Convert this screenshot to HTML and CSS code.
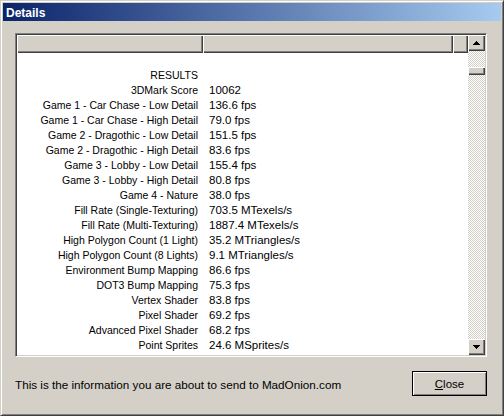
FILE: index.html
```html
<!DOCTYPE html>
<html>
<head>
<meta charset="utf-8">
<link rel="stylesheet" href="styles.css">
</head>
<body>
<div class="window">
  <div class="titlebar"><span class="title">Details</span></div>
  <div class="content">
    <div class="listbox">
      <div class="listmain">
        <div class="header">
          <div class="hcol c1"></div>
          <div class="hcol c2"></div>
          <div class="hcol c3"></div>
        </div>
        <div class="rows">
          <div class="row"><span class="lbl"></span><span class="val"></span></div>
          <div class="row"><span class="lbl">RESULTS</span><span class="val"></span></div>
          <div class="row"><span class="lbl">3DMark Score</span><span class="val">10062</span></div>
          <div class="row"><span class="lbl">Game 1 - Car Chase - Low Detail</span><span class="val">136.6 fps</span></div>
          <div class="row"><span class="lbl">Game 1 - Car Chase - High Detail</span><span class="val">79.0 fps</span></div>
          <div class="row"><span class="lbl">Game 2 - Dragothic - Low Detail</span><span class="val">151.5 fps</span></div>
          <div class="row"><span class="lbl">Game 2 - Dragothic - High Detail</span><span class="val">83.6 fps</span></div>
          <div class="row"><span class="lbl">Game 3 - Lobby - Low Detail</span><span class="val">155.4 fps</span></div>
          <div class="row"><span class="lbl">Game 3 - Lobby - High Detail</span><span class="val">80.8 fps</span></div>
          <div class="row"><span class="lbl">Game 4 - Nature</span><span class="val">38.0 fps</span></div>
          <div class="row"><span class="lbl">Fill Rate (Single-Texturing)</span><span class="val">703.5 MTexels/s</span></div>
          <div class="row"><span class="lbl">Fill Rate (Multi-Texturing)</span><span class="val">1887.4 MTexels/s</span></div>
          <div class="row"><span class="lbl">High Polygon Count (1 Light)</span><span class="val">35.2 MTriangles/s</span></div>
          <div class="row"><span class="lbl">High Polygon Count (8 Lights)</span><span class="val">9.1 MTriangles/s</span></div>
          <div class="row"><span class="lbl">Environment Bump Mapping</span><span class="val">86.6 fps</span></div>
          <div class="row"><span class="lbl">DOT3 Bump Mapping</span><span class="val">75.3 fps</span></div>
          <div class="row"><span class="lbl">Vertex Shader</span><span class="val">83.8 fps</span></div>
          <div class="row"><span class="lbl">Pixel Shader</span><span class="val">69.2 fps</span></div>
          <div class="row"><span class="lbl">Advanced Pixel Shader</span><span class="val">68.2 fps</span></div>
          <div class="row"><span class="lbl">Point Sprites</span><span class="val">24.6 MSprites/s</span></div>
        </div>
      </div>
      <div class="scrollbar">
        <div class="sbtn"><svg width="7" height="4" viewBox="0 0 7 4"><path d="M3 0h1v1h1v1h1v1h1v1H0V3h1V2h1V1h1z" fill="#000"/></svg></div>
        <div class="track"><div class="thumb"></div></div>
        <div class="sbtn"><svg width="7" height="4" viewBox="0 0 7 4"><path d="M0 0h7v1H6v1H5v1H4v1H3V3H2V2H1V1H0z" fill="#000"/></svg></div>
      </div>
    </div>
    <div class="footer">
      <span class="info">This is the information you are about to send to MadOnion.com</span>
      <button class="btn"><span class="ul">C</span>lose</button>
    </div>
  </div>
</div>
</body>
</html>
```
FILE: styles.css
```css
html, body {
  margin: 0;
  padding: 0;
  background: #d4d0c8;
}
body {
  font-family: "Liberation Sans", Arial, sans-serif;
  font-size: 11px;
  color: #000;
}
.window {
  width: 504px;
  height: 416px;
  box-sizing: border-box;
  background: #d4d0c8;
  border: 1px solid;
  border-color: #d4d0c8 #404040 #404040 #d4d0c8;
  box-shadow: inset 1px 1px #fff, inset -1px -1px #808080;
  padding: 2px;
  display: flex;
  flex-direction: column;
}
.titlebar {
  height: 18px;
  flex: none;
  background: linear-gradient(to right, #0a246a, #a6caf0);
  display: flex;
  align-items: center;
  padding: 1px 0 0 3px;
  box-sizing: border-box;
}
.title {
  color: #fff;
  font-weight: bold;
  font-size: 12px;
  line-height: 14px;
}
.content {
  padding: 12px 14px 0 12px;
  display: flex;
  flex-direction: column;
}
.listbox {
  height: 324px;
  box-sizing: border-box;
  border: 1px solid;
  border-color: #808080 #fff #fff #808080;
  box-shadow: inset 1px 1px #404040, inset -1px -1px #d4d0c8;
  padding: 1px;
  background: #fff;
  display: flex;
}
.listmain {
  flex: 1;
  overflow: hidden;
  display: flex;
  flex-direction: column;
}
.header {
  height: 18px;
  flex: none;
  display: flex;
}
.hcol {
  background: #d4d0c8;
  box-shadow: inset 1px 1px #fff, inset -1px -1px #404040, inset -2px -2px #808080;
}
.c1 { width: 186px; }
.c2 { width: 250px; }
.c3 { flex: 1; }
.rows {
  display: flex;
  flex-direction: column;
  font-size: 10.5px;
}
.row {
  display: flex;
  height: 15px;
  line-height: 15px;
  white-space: nowrap;
}
.lbl {
  width: 186px;
  box-sizing: border-box;
  text-align: right;
  padding-right: 5px;
}
.val {
  padding-left: 6px;
  font-size: 11.5px;
}
.scrollbar {
  width: 17px;
  flex: none;
  display: flex;
  flex-direction: column;
  background: repeating-conic-gradient(#d4d0c8 0 25%, #fff 0 50%) 0 0 / 2px 2px;
}
.sbtn {
  height: 16px;
  flex: none;
  background: #d4d0c8;
  box-shadow: inset 1px 1px #fff, inset -1px -1px #404040, inset -2px -2px #808080;
  display: flex;
  align-items: center;
  justify-content: center;
}
.sbtn svg { display: block; }
.track {
  flex: 1;
}
.thumb {
  margin-top: 16px;
  height: 8px;
  background: #d4d0c8;
  box-shadow: inset 1px 1px #fff, inset -1px -1px #404040, inset -2px -2px #808080;
}
.footer {
  margin-top: 14px;
  display: flex;
  justify-content: space-between;
  align-items: center;
}
.info {
  margin-top: 2px;
  font-size: 11.7px;
}
.btn {
  width: 75px;
  height: 25px;
  margin: 0;
  padding: 0;
  font-family: "Liberation Sans", Arial, sans-serif;
  font-size: 11.5px;
  color: #000;
  background: #d4d0c8;
  border: 1px solid #000;
  box-shadow: inset 1px 1px #fff, inset -1px -1px #808080;
}
.ul { text-decoration: underline; }
```
